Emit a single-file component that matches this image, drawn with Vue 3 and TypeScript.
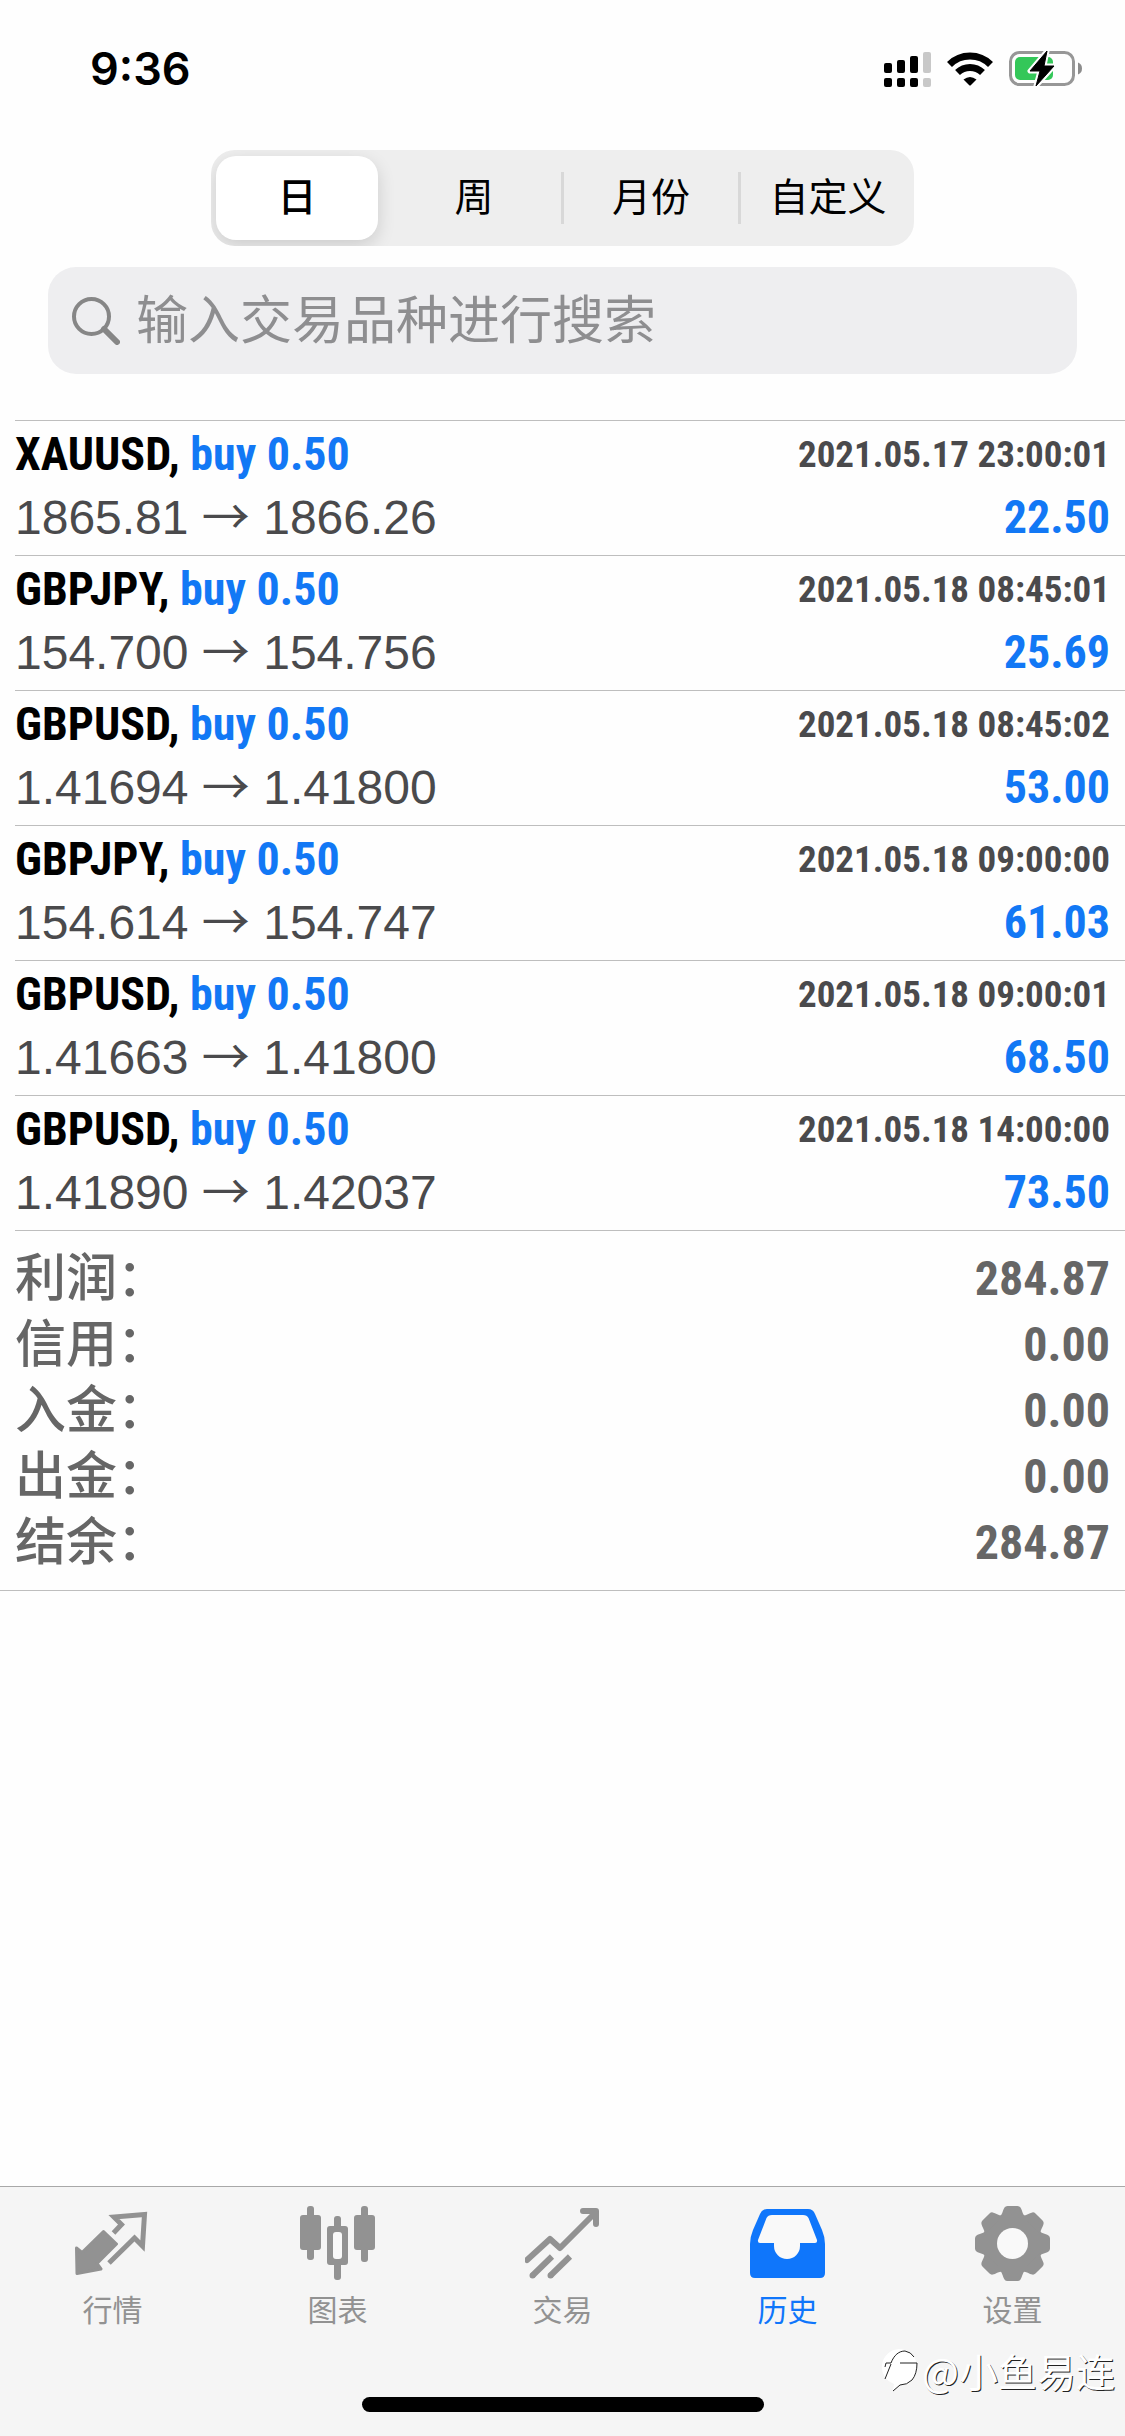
<script setup lang="ts">
import { ref } from 'vue'

interface Deal {
  symbol: string
  action: string
  open: string
  close: string
  time: string
  profit: string
}

const periods: string[] = ['日', '周', '月份', '自定义']
const period = ref<string>('日')
const query = ref<string>('')

const deals: Deal[] = [
  { symbol: 'XAUUSD', action: 'buy 0.50', open: '1865.81', close: '1866.26', time: '2021.05.17 23:00:01', profit: '22.50' },
  { symbol: 'GBPJPY', action: 'buy 0.50', open: '154.700', close: '154.756', time: '2021.05.18 08:45:01', profit: '25.69' },
  { symbol: 'GBPUSD', action: 'buy 0.50', open: '1.41694', close: '1.41800', time: '2021.05.18 08:45:02', profit: '53.00' },
  { symbol: 'GBPJPY', action: 'buy 0.50', open: '154.614', close: '154.747', time: '2021.05.18 09:00:00', profit: '61.03' },
  { symbol: 'GBPUSD', action: 'buy 0.50', open: '1.41663', close: '1.41800', time: '2021.05.18 09:00:01', profit: '68.50' },
  { symbol: 'GBPUSD', action: 'buy 0.50', open: '1.41890', close: '1.42037', time: '2021.05.18 14:00:00', profit: '73.50' },
]

const totals: { label: string; value: string }[] = [
  { label: '利润：', value: '284.87' },
  { label: '信用：', value: '0.00' },
  { label: '入金：', value: '0.00' },
  { label: '出金：', value: '0.00' },
  { label: '结余：', value: '284.87' },
]

const toothAngles: number[] = [0, 45, 90, 135, 180, 225, 270, 315]
</script>

<template>
  <div class="app">
    <header class="status">
      <time class="clock">9:36</time>
      <div class="indicators">
        <svg width="47" height="35" viewBox="0 0 47 35" aria-hidden="true">
          <rect x="0" y="11" width="8" height="10" rx="2" />
          <rect x="13" y="8" width="8" height="13" rx="2" />
          <rect x="26" y="4" width="8" height="17" rx="2" />
          <rect x="39" y="0" width="8" height="21" rx="2" fill="#c8c8c8" />
          <rect x="0" y="26" width="8" height="9" rx="2" />
          <rect x="13" y="26" width="8" height="9" rx="2" />
          <rect x="26" y="26" width="8" height="9" rx="2" />
          <rect x="39" y="26" width="8" height="9" rx="2" fill="#c8c8c8" />
        </svg>
        <svg width="46" height="35" viewBox="0 0 46 35" aria-hidden="true">
          <g fill="none" stroke="#000" stroke-width="7">
            <path d="M2.5 12.500A29 29 0 0 1 43.500 12.500" />
            <path d="M10.500 20.500A18 18 0 0 1 35.500 20.500" />
          </g>
          <path d="M16.500 27.500Q23 22.500 29.500 27.500L24 33Q23 34 22 33Z" />
        </svg>
        <svg width="74" height="36" viewBox="0 0 74 36" aria-hidden="true">
          <rect x="1.500" y="1.500" width="63" height="32" rx="9" fill="none" stroke="#979797" stroke-width="3" />
          <path d="M69 11.500Q73 13 73 17.500T69 23.500Z" fill="#8c8c8c" />
          <rect x="6" y="6" width="38" height="23" rx="5" fill="#34c759" />
          <path d="M38 0L21 20H31L27 35L45 15H35Z" stroke="#fefefe" stroke-width="5" stroke-linejoin="round" />
          <path d="M38 0L21 20H31L27 35L45 15H35Z" stroke="#000" stroke-width="1" stroke-linejoin="round" />
        </svg>
      </div>
    </header>

    <div class="segments">
      <button
        v-for="name in periods"
        :key="name"
        type="button"
        class="segment"
        :class="{ selected: name === period }"
        :aria-pressed="name === period"
        @click="period = name"
      >{{ name }}</button>
    </div>

    <label class="search">
      <svg width="48" height="48" viewBox="0 0 48 48" aria-hidden="true">
        <circle cx="19.500" cy="19.500" r="17.500" fill="none" stroke="#868686" stroke-width="4" />
        <path d="M32 32L45 45" stroke="#868686" stroke-width="6" stroke-linecap="round" />
      </svg>
      <input v-model="query" type="text" aria-label="输入交易品种进行搜索" placeholder="输入交易品种进行搜索" />
    </label>

    <main>
      <ul class="deals">
        <li v-for="deal in deals" :key="deal.time" class="deal">
          <div class="line">
            <span class="title">{{ deal.symbol }}, <span class="blue">{{ deal.action }}</span></span>
            <time class="date">{{ deal.time }}</time>
          </div>
          <div class="line">
            <span class="prices">{{ deal.open }} <span class="arrow">→</span> {{ deal.close }}</span>
            <span class="profit blue">{{ deal.profit }}</span>
          </div>
        </li>
      </ul>
      <div class="summary">
        <dl class="totals">
          <div v-for="total in totals" :key="total.label" class="total">
            <dt>{{ total.label }}</dt>
            <dd>{{ total.value }}</dd>
          </div>
        </dl>
      </div>
    </main>

    <footer class="bottom">
      <nav class="tabs">
        <a href="#quotes" class="tab">
          <svg class="icon" viewBox="0 0 75 75" aria-hidden="true">
            <path d="M1.500 42L7 46.500L28.500 25.500L41.500 38L22 57.500L26 63L2 67.500Z" fill="currentColor" stroke="currentColor" stroke-width="3" stroke-linejoin="round" />
            <path d="M38.500 27L46.500 18.500L39 11L69.500 8.500L67.500 40L59.500 32L34 57" fill="none" stroke="currentColor" stroke-width="5" />
          </svg>
          <span>行情</span>
        </a>
        <a href="#charts" class="tab">
          <svg class="icon" viewBox="0 0 75 75" fill="currentColor" aria-hidden="true">
            <rect x="0" y="9" width="21" height="35" rx="3" />
            <rect x="7" y="0" width="7" height="54" rx="3" />
            <rect x="54" y="9" width="21" height="35" rx="3" />
            <rect x="61" y="0" width="7" height="56" rx="3" />
            <rect x="34" y="10" width="7" height="64" rx="3" />
            <rect x="27" y="20" width="21" height="39" rx="3" />
            <rect x="33" y="26" width="9" height="27" rx="3" fill="#f9f9f9" />
          </svg>
          <span>图表</span>
        </a>
        <a href="#trade" class="tab">
          <svg class="icon" viewBox="0 0 75 75" fill="none" stroke="currentColor" stroke-width="6" aria-hidden="true">
            <path d="M2 54L25 33L35 42L69 8" stroke-linecap="round" stroke-linejoin="round" />
            <path d="M58 5H71V18" stroke-linecap="round" stroke-linejoin="round" />
            <path d="M7.500 69.500L27 50.500M25.500 69.500L45 50.500" />
            <path d="M7.500 69.500H7.600M25.500 69.500H25.600" stroke-linecap="round" />
          </svg>
          <span>交易</span>
        </a>
        <a href="#history" class="tab active" aria-current="page">
          <svg class="icon" viewBox="0 0 75 75" aria-hidden="true">
            <path d="M0 38Q0 31 3 24L10 8Q12 3 17 3H58Q63 3 65 8L72 24Q75 31 75 38V67Q75 72 70 72H5Q0 72 0 67Z" fill="currentColor" />
            <path d="M22 9H53Q57 9 58.500 12L67 34Q67.500 37 65 37H50V40A13 13 0 0 1 24 40V37H10Q7.500 37 8 34L16.500 12Q18 9 22 9Z" fill="#f9f9f9" />
          </svg>
          <span>历史</span>
        </a>
        <a href="#settings" class="tab">
          <svg class="icon" viewBox="-37.500 -37.500 75 75" fill="currentColor" aria-hidden="true">
            <circle r="30" />
            <path
              v-for="angle in toothAngles"
              :key="angle"
              :transform="`rotate(${angle})`"
              d="M-14 -26C-10 -28 -10 -33 -8 -36Q-7 -37.500 -5 -37.500H5Q7 -37.500 8 -36C10 -33 10 -28 14 -26Z"
            />
            <circle r="15.500" fill="#f9f9f9" />
          </svg>
          <span>设置</span>
        </a>
      </nav>
      <div class="home-bar"></div>
      <div class="watermark">
        <svg width="38" height="44" viewBox="0 0 38 44" aria-hidden="true">
          <path d="M19 1A18 18 0 0 1 37 19C37 32 28 37 20 37L13 43L14 36A18 18 0 0 1 19 1Z" fill="#fff" />
          <path d="M5 31L11 16M5 19L6 15H11C14 7 19 3 25 3Q31 4 34 9M20 15H37Q37 26 32 32Q27 37 20 37L13 43" fill="none" stroke="#222" stroke-width="1" />
        </svg>
        <span>@小鱼易连</span>
      </div>
    </footer>
  </div>
</template>

<style>
body {
  margin: 0;
  background: #fefefe;
}
</style>

<style scoped>
.app {
  --blue: #1278f5;
  --ui: "Liberation Sans", "Noto Sans CJK SC", sans-serif;
  display: flex;
  flex-direction: column;
  min-height: 100vh;
  color: #000;
  font-family: var(--ui);
}

.status {
  display: flex;
  justify-content: space-between;
  align-items: center;
  height: 138px;
  padding: 0 42px 0 90px;
}

.clock {
  font: 600 45px/56px Inter, sans-serif;
}

.indicators {
  display: flex;
  align-items: center;
  gap: 16px;
}

.segments {
  display: grid;
  grid-template-columns: repeat(4, 1fr);
  gap: 15px;
  box-sizing: border-box;
  width: 62.5%;
  height: 96px;
  margin: 12px auto 21px;
  padding: 6px 5px;
  border-radius: 24px;
  background: #eee;
  overflow: hidden;
}

.segment {
  position: relative;
  padding: 0;
  border: 0;
  border-radius: 20px;
  background: none;
  color: #000;
  font: 400 39px/56px var(--ui);
}

.segment.selected {
  background: #fff;
  font-weight: 500;
  box-shadow: 0 6px 18px rgba(0, 0, 0, 0.14);
}

.segment:not(.selected) + .segment::before {
  content: "";
  position: absolute;
  top: 16px;
  bottom: 16px;
  left: -9px;
  width: 3px;
  background: #d8d8d8;
}

.search {
  display: flex;
  align-items: center;
  gap: 16px;
  height: 107px;
  margin: 0 48px 46px;
  padding: 0 24px;
  border-radius: 28px;
  background: #eeeef0;
}

.search input {
  flex: 1;
  min-width: 0;
  padding: 0;
  border: 0;
  outline: 0;
  background: none;
  color: #000;
  font: 400 52px/72px var(--ui);
}

.search input::placeholder {
  color: #8e8e90;
  opacity: 1;
}

.deals {
  margin: 0 0 0 15px;
  padding: 0;
  list-style: none;
}

.deal {
  padding: 2px 15px 6px 0;
  border-top: 1px solid #bebebe;
}

.line {
  display: flex;
  justify-content: space-between;
  font-size: 48px;
  line-height: 63px;
  white-space: nowrap;
}

.title,
.date,
.profit,
dd {
  font-family: "Liberation Sans Narrow", "Roboto Condensed", "Liberation Sans", sans-serif;
  font-weight: 700;
}

.title,
.profit {
  font-size: 46px;
}

.date {
  color: #4a4a4c;
  font-size: 37px;
}

.prices {
  color: #4a4a4c;
}

.arrow {
  font-family: "Noto Sans CJK SC", sans-serif;
  line-height: 1;
}

.blue {
  color: var(--blue);
}

.summary {
  padding-left: 15px;
  border-bottom: 1px solid #bebebe;
}

.totals {
  margin: 0;
  padding: 15px 15px 14px 0;
  border-top: 1px solid #bebebe;
  color: #666;
  line-height: 66px;
}

.total {
  display: flex;
  justify-content: space-between;
}

dt {
  font-family: var(--ui);
  font-size: 51px;
  font-weight: 500;
}

dd {
  margin: 0;
  font-size: 48px;
}

.bottom {
  position: relative;
  display: flex;
  flex-direction: column;
  align-items: center;
  justify-content: space-between;
  box-sizing: border-box;
  height: 250px;
  margin-top: auto;
  padding: 19px 0 24px;
  border-top: 1px solid #a8a8a8;
  background: #f5f5f5;
}

.tabs {
  display: grid;
  grid-template-columns: repeat(5, 1fr);
  width: 100%;
}

.tab {
  display: flex;
  flex-direction: column;
  align-items: center;
  gap: 8px;
  color: #929292;
  font: 400 30px/44px var(--ui);
  text-decoration: none;
}

.tab.active {
  color: #0f76fb;
}

.icon {
  width: 75px;
  height: 75px;
}

.home-bar {
  width: 402px;
  height: 15px;
  border-radius: 8px;
  background: #000;
}

.watermark {
  position: absolute;
  right: 10px;
  bottom: 38px;
  display: flex;
  align-items: center;
  gap: 4px;
  color: #fff;
  font: 400 39px/56px "Noto Sans CJK SC", sans-serif;
  text-shadow: 1px 1px 0 #222;
}
</style>
